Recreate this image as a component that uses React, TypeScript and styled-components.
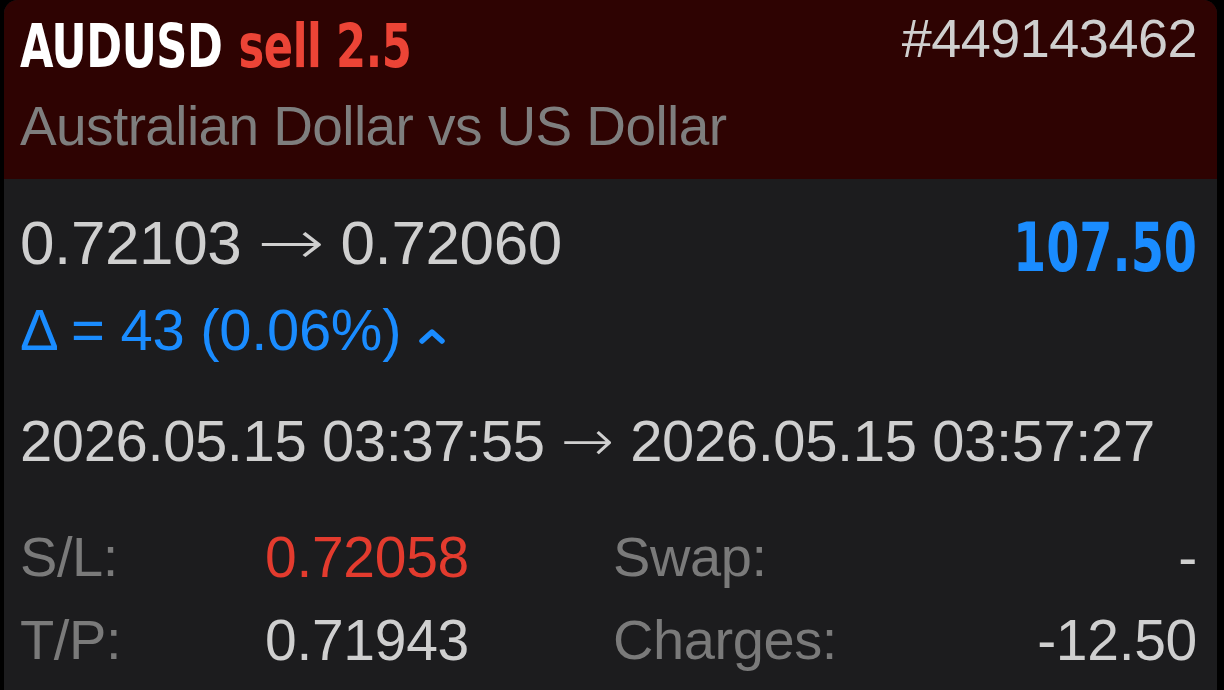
import React from 'react';
import styled, { createGlobalStyle } from 'styled-components';

const GlobalStyle = createGlobalStyle`
    html, body {
        margin: 0;
        padding: 0;
        background: #000;
        overflow: hidden;
    }
    body {
        font-family: "Liberation Sans", Arial, sans-serif;
    }
`;

// the display face is narrower than anything installed, so it gets squeezed a bit more
const condensed = `"DejaVu Sans Condensed", "DejaVu Sans", sans-serif`;

const Page = styled.div`
    width: 1224px;
    height: 690px;
    padding: 0 7px 0 4px;
    box-sizing: border-box;
    overflow: hidden;
`;

const Card = styled.section`
    border-radius: 14px 14px 0 0;
    overflow: hidden;
    background: #1c1c1e;
    height: 720px;
`;

const Header = styled.header`
    background: #2e0302;
    height: 179px;
    box-sizing: border-box;
    padding: 10px 20px 0 16px;
`;

const TitleRow = styled.div`
    display: flex;
    justify-content: space-between;
    align-items: flex-start;
`;

const Symbol = styled.h1`
    margin: 0;
    display: inline-block;
    transform: scaleX(0.8);
    transform-origin: left center;
    font-family: ${condensed};
    font-stretch: condensed;
    font-weight: 700;
    font-size: 60px;
    line-height: 72px;
    color: #fff;
    letter-spacing: -0.5px;
    white-space: nowrap;
`;

const Side = styled.span`
    color: #ec4436;
    margin-left: 20px;
`;

const Ticket = styled.span`
    font-size: 54px;
    line-height: 56px;
    color: #cfcfcf;
    letter-spacing: -0.5px;
`;

const Description = styled.div`
    margin-top: 14px;
    font-size: 55px;
    line-height: 60px;
    color: #7e7e7e;
    letter-spacing: -0.6px;
`;

const Body = styled.div`
    padding: 30px 20px 0 16px;
`;

const PriceRow = styled.div`
    display: flex;
    justify-content: space-between;
    align-items: center;
    height: 66px;
`;

const Text = styled.span<{ $size?: number }>`
    font-size: ${p => p.$size ?? 58}px;
    color: #cfcfcf;
    letter-spacing: -0.4px;
    white-space: nowrap;
`;

const Arrow = styled.span<{ $stretch?: number }>`
    font-family: "DejaVu Sans", sans-serif;
    font-weight: 200;
    display: inline-block;
    transform: scaleX(${p => p.$stretch ?? 1});
    margin: 0 ${p => 1 + ((p.$stretch ?? 1) - 1) * 20}px;
`;

const Profit = styled.span`
    display: inline-block;
    transform: scaleX(0.78);
    transform-origin: right center;
    font-family: ${condensed};
    font-stretch: condensed;
    font-weight: 700;
    font-size: 68px;
    color: #1a8cff;
    margin-top: 10px;
`;

const DeltaRow = styled.div`
    display: flex;
    align-items: center;
    gap: 16px;
    height: 60px;
    margin-top: 24px;
    font-size: 58px;
    color: #1a8cff;
    letter-spacing: -0.3px;
`;

const DateRow = styled.div`
    margin-top: 50px;
    height: 64px;
    display: flex;
    align-items: center;
`;

const Stats = styled.div`
    margin-top: 42px;
    display: grid;
    grid-template-columns: 245px 348px 1fr auto;
    grid-auto-rows: 83px;
    align-items: center;
`;

const Label = styled.span`
    font-size: 56px;
    color: #7a7a7a;
    letter-spacing: -0.4px;
`;

const Value = styled.span<{ $color?: string; $right?: boolean }>`
    font-size: 57px;
    color: ${p => p.$color ?? '#cfcfcf'};
    text-align: ${p => (p.$right ? 'right' : 'left')};
    letter-spacing: -0.3px;
`;

const Chevron = () => (
    <svg width="30" height="20" viewBox="0 0 30 20" style={{ marginTop: 14 }}>
        <polyline
            points="5,15 15,6 25,15"
            fill="none"
            stroke="#1a8cff"
            strokeWidth="5.5"
            strokeLinecap="round"
            strokeLinejoin="round"
        />
    </svg>
);

export default function App() {
    return (
        <Page>
            <GlobalStyle />
            <Card>
                <Header>
                    <TitleRow>
                        <Symbol>
                            AUDUSD<Side>sell 2.5</Side>
                        </Symbol>
                        <Ticket>#449143462</Ticket>
                    </TitleRow>
                    <Description>Australian Dollar vs US Dollar</Description>
                </Header>
                <Body>
                    <PriceRow>
                        <Text $size={62}>
                            0.72103 <Arrow $stretch={1.3}>→</Arrow> 0.72060
                        </Text>
                        <Profit>107.50</Profit>
                    </PriceRow>
                    <DeltaRow>
                        <span>Δ = 43 (0.06%)</span>
                        <Chevron />
                    </DeltaRow>
                    <DateRow>
                        <Text>
                            2026.05.15 03:37:55 <Arrow $stretch={1.1}>→</Arrow> 2026.05.15 03:57:27
                        </Text>
                    </DateRow>
                    <Stats>
                        <Label>S/L:</Label>
                        <Value $color="#e33b2e">0.72058</Value>
                        <Label>Swap:</Label>
                        <Value $right>-</Value>
                        <Label>T/P:</Label>
                        <Value>0.71943</Value>
                        <Label>Charges:</Label>
                        <Value $right>-12.50</Value>
                    </Stats>
                </Body>
            </Card>
        </Page>
    );
}
